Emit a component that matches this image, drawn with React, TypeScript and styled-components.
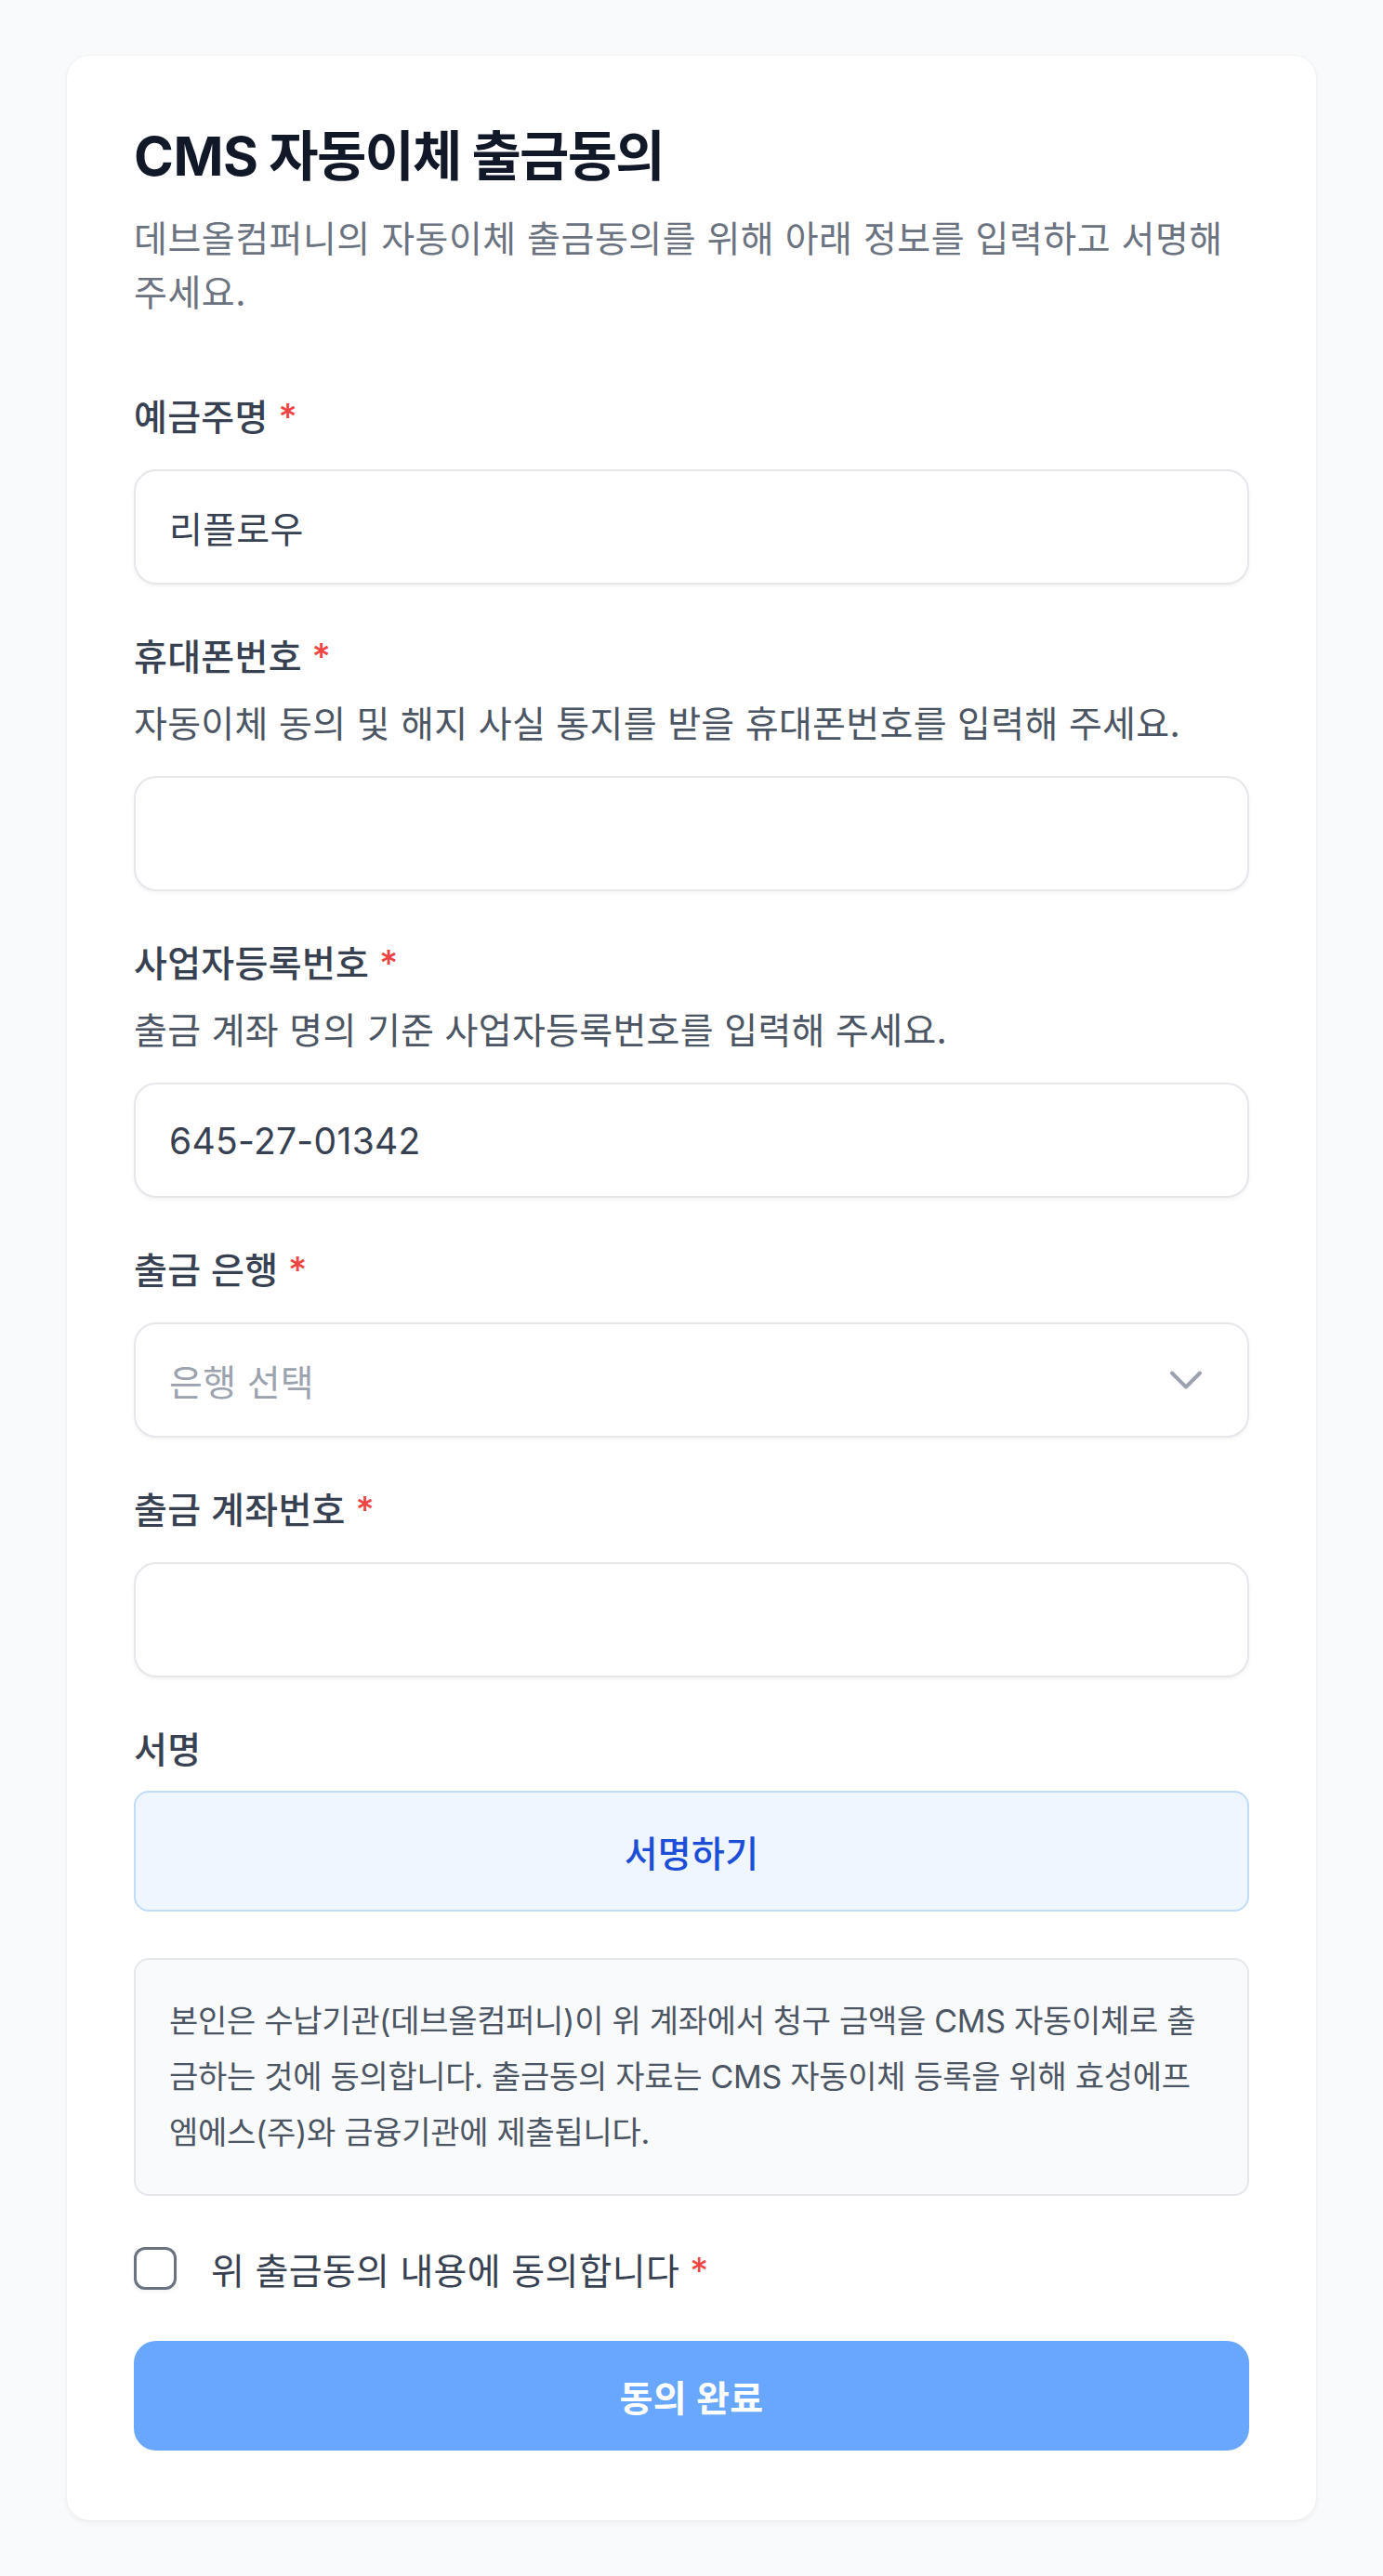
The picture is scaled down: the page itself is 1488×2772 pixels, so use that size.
import React, { useState } from 'react'
import styled, { createGlobalStyle } from 'styled-components'

const GlobalStyle = createGlobalStyle`
  * {
    box-sizing: border-box;
  }
  body {
    margin: 0;
    background: #f9fafb;
    font-family: Inter, "Noto Sans CJK KR", sans-serif;
    color: #374151;
  }
`

const Page = styled.div`
  display: flex;
  justify-content: center;
  padding: 60px 0;
`

const Card = styled.div`
  width: 1344px;
  background: #ffffff;
  border-radius: 24px;
  padding: 72px 72px 75px;
  box-shadow: 0 2px 6px rgba(17, 24, 39, 0.06), 0 0 2px rgba(17, 24, 39, 0.06);
`

const Header = styled.header`
  margin-bottom: 77px;
`

const Title = styled.h1`
  margin: 0;
  font-size: 58px;
  line-height: 72px;
  font-weight: 700;
  letter-spacing: -1.8px;
  color: #111827;
`

const Latin = styled.span`
  letter-spacing: -0.5px;
`

const Description = styled.p`
  margin: 24px 0 0;
  font-size: 39px;
  line-height: 58px;
  letter-spacing: 0.5px;
  color: #6b7280;
`

const Form = styled.form`
  display: flex;
  flex-direction: column;
  gap: 50px;
`

const Field = styled.div<{ $gap?: number }>`
  display: flex;
  flex-direction: column;
  gap: ${(p) => p.$gap ?? 28}px;
`

const FieldHead = styled.div`
  display: flex;
  flex-direction: column;
  gap: 16px;
`

const Label = styled.label`
  font-size: 39px;
  line-height: 56px;
  font-weight: 500;
  letter-spacing: 0.3px;
  color: #374151;
`

const Required = styled.span`
  color: #ef4444;
`

const Help = styled.p`
  margin: 0;
  font-size: 39px;
  line-height: 56px;
  letter-spacing: 0.3px;
  color: #4b5563;
`

const TextInput = styled.input`
  width: 100%;
  height: 124px;
  padding: 0 36px;
  border: 2px solid #e5e7eb;
  border-radius: 24px;
  background: #ffffff;
  box-shadow: 0 2px 4px rgba(0, 0, 0, 0.05);
  font-family: inherit;
  font-size: 39px;
  letter-spacing: 0.3px;
  color: #374151;
  outline: none;
`

const SelectBox = styled.button`
  display: flex;
  align-items: center;
  justify-content: space-between;
  width: 100%;
  height: 124px;
  padding: 0 42px 0 36px;
  border: 2px solid #e5e7eb;
  border-radius: 24px;
  background: #ffffff;
  box-shadow: 0 2px 4px rgba(0, 0, 0, 0.05);
  font-family: inherit;
  font-size: 39px;
  letter-spacing: 0.3px;
  color: #9ca3af;
  cursor: pointer;
`

const Chevron = styled.svg`
  width: 48px;
  height: 48px;
  flex-shrink: 0;
`

const SignButton = styled.button`
  width: 100%;
  height: 130px;
  border: 2px solid #bfdbfe;
  border-radius: 16px;
  background: #eff6ff;
  font-family: inherit;
  font-size: 39px;
  font-weight: 500;
  letter-spacing: 0.3px;
  color: #1d4ed8;
  cursor: pointer;
`

const Notice = styled.div`
  padding: 36px;
  border: 2px solid #e5e7eb;
  border-radius: 16px;
  background: #f9fafb;
  font-size: 34px;
  line-height: 60px;
  letter-spacing: -0.3px;
  color: #4b5563;
`

const AgreeRow = styled.label`
  display: flex;
  align-items: center;
  gap: 37px;
  height: 56px;
  font-size: 39px;
  letter-spacing: 0.3px;
  color: #374151;
  cursor: pointer;
`

const CheckBox = styled.span<{ $checked: boolean }>`
  width: 46px;
  height: 46px;
  flex-shrink: 0;
  border: 3px solid ${(p) => (p.$checked ? '#2563eb' : '#6b7280')};
  border-radius: 12px;
  background: ${(p) => (p.$checked ? '#2563eb' : '#ffffff')};
  box-shadow: 0 2px 4px rgba(0, 0, 0, 0.05);
`

const SubmitButton = styled.button<{ $enabled: boolean }>`
  width: 100%;
  height: 118px;
  border: none;
  border-radius: 24px;
  background: ${(p) => (p.$enabled ? '#2563eb' : '#69a6fd')};
  font-family: inherit;
  font-size: 39px;
  font-weight: 600;
  letter-spacing: 0.3px;
  color: #ffffff;
  cursor: pointer;
`

const App = () => {
  const [agreed, setAgreed] = useState(false)

  return (
    <>
      <GlobalStyle />
      <Page>
        <Card>
          <Header>
            <Title>
              <Latin>CMS</Latin> 자동이체 출금동의
            </Title>
            <Description>
              데브올컴퍼니의 자동이체 출금동의를 위해 아래 정보를 입력하고 서명해
              주세요.
            </Description>
          </Header>
          <Form onSubmit={(e) => e.preventDefault()}>
            <Field>
              <Label>
                예금주명<Required> *</Required>
              </Label>
              <TextInput defaultValue="리플로우" />
            </Field>
            <Field>
              <FieldHead>
                <Label>
                  휴대폰번호<Required> *</Required>
                </Label>
                <Help>
                  자동이체 동의 및 해지 사실 통지를 받을 휴대폰번호를 입력해
                  주세요.
                </Help>
              </FieldHead>
              <TextInput />
            </Field>
            <Field>
              <FieldHead>
                <Label>
                  사업자등록번호<Required> *</Required>
                </Label>
                <Help>출금 계좌 명의 기준 사업자등록번호를 입력해 주세요.</Help>
              </FieldHead>
              <TextInput defaultValue="645-27-01342" />
            </Field>
            <Field>
              <Label>
                출금 은행<Required> *</Required>
              </Label>
              <SelectBox type="button">
                <span>은행 선택</span>
                <Chevron
                  viewBox="0 0 24 24"
                  fill="none"
                  stroke="#9ca3af"
                  strokeWidth={2}
                >
                  <path
                    d="M19.5 8.25l-7.5 7.5-7.5-7.5"
                    strokeLinecap="round"
                    strokeLinejoin="round"
                  />
                </Chevron>
              </SelectBox>
            </Field>
            <Field>
              <Label>
                출금 계좌번호<Required> *</Required>
              </Label>
              <TextInput />
            </Field>
            <Field $gap={16}>
              <Label>서명</Label>
              <SignButton type="button">서명하기</SignButton>
            </Field>
            <Notice>
              본인은 수납기관(데브올컴퍼니)이 위 계좌에서 청구 금액을 CMS
              자동이체로 출금하는 것에 동의합니다. 출금동의 자료는 CMS 자동이체
              등록을 위해 효성에프엠에스(주)와 금융기관에 제출됩니다.
            </Notice>
            <AgreeRow onClick={() => setAgreed(!agreed)}>
              <CheckBox $checked={agreed} />
              <span>
                위 출금동의 내용에 동의합니다<Required> *</Required>
              </span>
            </AgreeRow>
            <SubmitButton type="submit" $enabled={agreed}>
              동의 완료
            </SubmitButton>
          </Form>
        </Card>
      </Page>
    </>
  )
}

export default App
